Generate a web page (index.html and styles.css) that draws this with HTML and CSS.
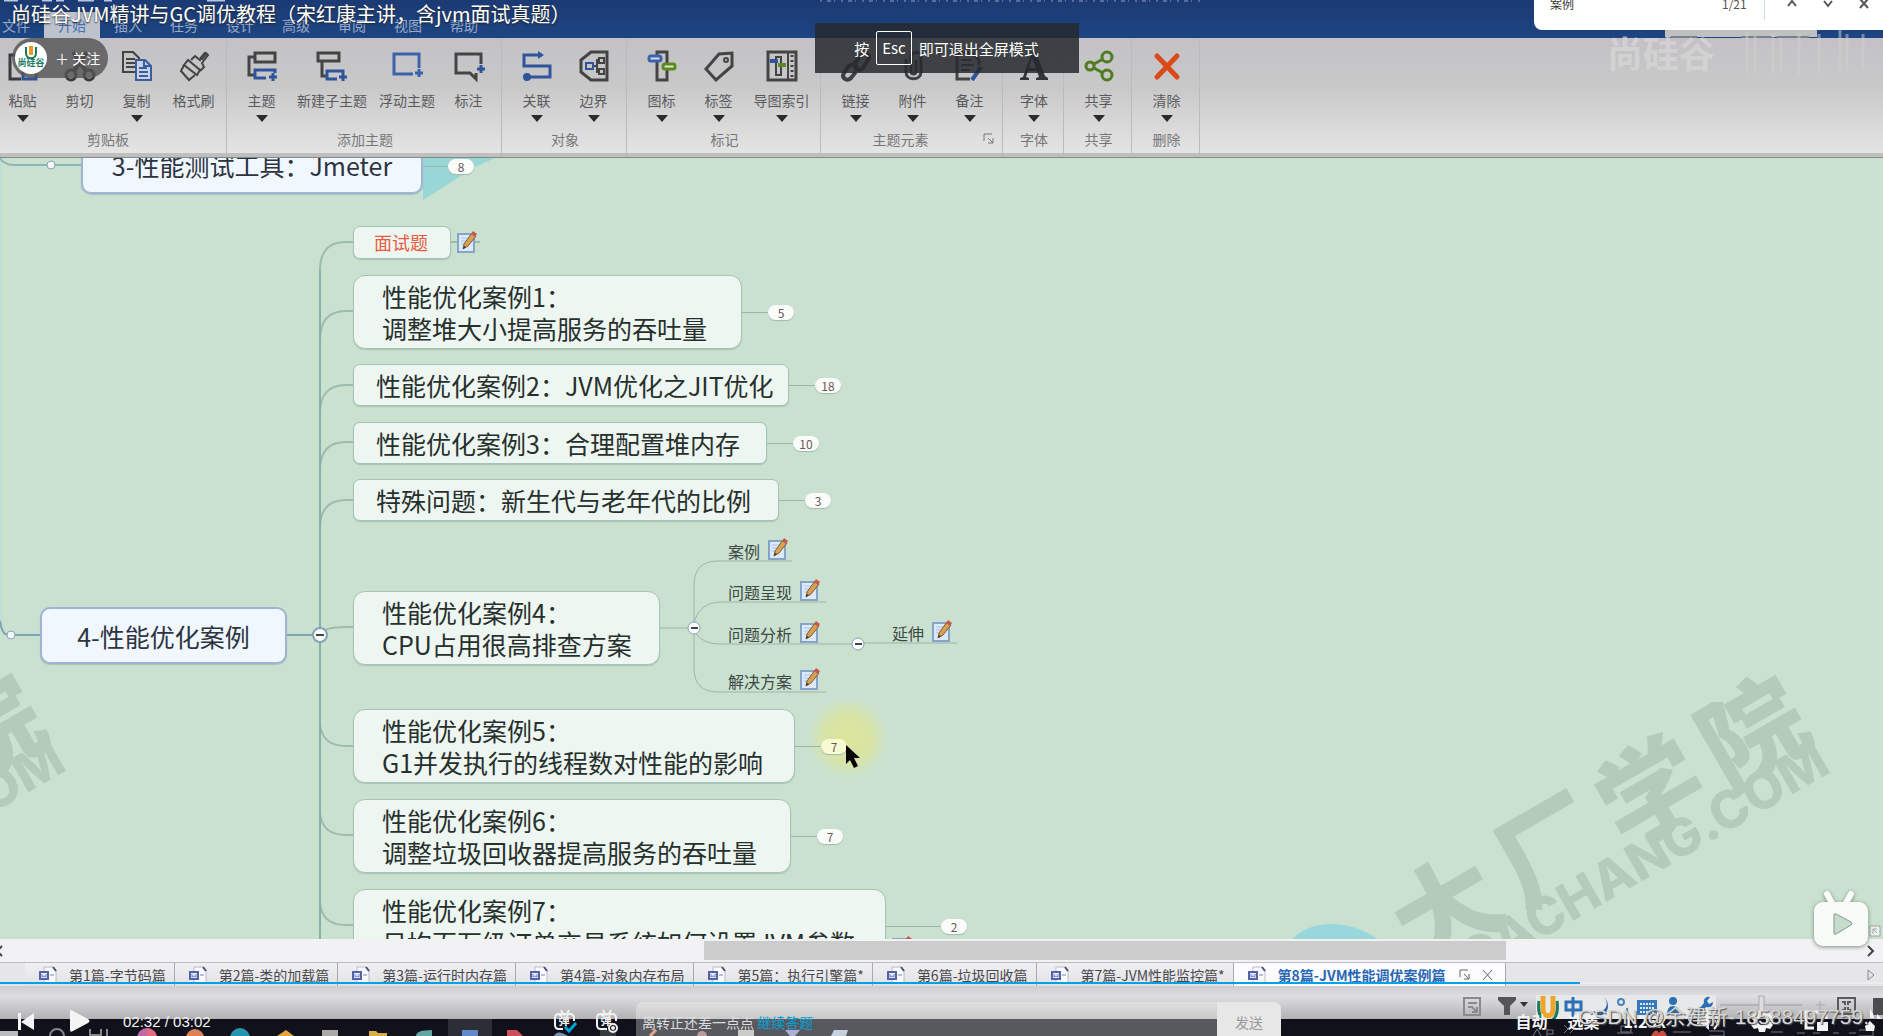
FILE: index.html
```html
<!DOCTYPE html>
<html lang="zh-CN">
<head>
<meta charset="utf-8">
<meta name="viewport" content="width=device-width, initial-scale=1">
<title>尚硅谷JVM精讲与GC调优教程</title>
<link rel="stylesheet" href="styles.css">
</head>
<body>
<svg class="defs" aria-hidden="true">
  <symbol id="note" viewBox="0 0 20 22">
    <path d="M1 3h16v18H1z" fill="#dbe9f8" stroke="#86a3c9" stroke-width="2"/>
    <path d="M4 7h8M4 10h6M4 13h4" stroke="#aac6e6"/>
    <path d="M6 18l1-5L15 2l4 3-8 10z" fill="#d9a252" stroke="#7a5a35"/>
    <path d="M14 3l2-3 4 3-2 3z" fill="#c4594c"/>
    <path d="M6 18l1-3 2 1z" fill="#333"/>
  </symbol>
  <symbol id="doc" viewBox="0 0 18 18">
    <path d="M5 1h9l3 3v13H5z" fill="#fbfbfd" stroke="#b9bac6"/>
    <path d="M14 1l3 4" stroke="#4a5078" stroke-width="2"/>
    <rect x="1" y="6" width="8" height="7" fill="#e8ebf8" stroke="#5263ab" stroke-width="2"/>
    <path d="M3 8v3l2-1 2 1V8M11 9h4" stroke="#7581bb" fill="none"/>
  </symbol>
  <symbol id="arrow" viewBox="0 0 12 7"><path d="M0 0h12L6 7z" fill="#2b2b2d"/></symbol>
</svg>

<main class="screen">
  <header class="titlebar">
    <svg class="quick" viewBox="0 0 240 4" aria-hidden="true"><path d="M4 0h14M42 0h10M56 0h8M78 0h16M104 0h8M207 0h18" stroke="#b8c6de" stroke-width="3"/></svg>
    <svg class="docname" viewBox="0 0 390 4" aria-hidden="true"><path d="M0 1h385" stroke="#8ea3c6" stroke-width="2" stroke-dasharray="2 5 4 3 1 6"/></svg>
    <nav class="menu">
      <button>文件</button><button class="current">开始</button><button>插入</button><button>任务</button><button>设计</button><button>高级</button><button>审阅</button><button>视图</button><button>帮助</button>
    </nav>
  </header>

  <section class="ribbon">
    <div class="group">
      <div class="tools">
        <button class="tool"><svg class="icon" viewBox="0 0 30 30" fill="none" stroke="#3a3a3c" stroke-width="3"><path d="M13 28H2V4h24v6"/><path d="M15 12h13v16H15z" stroke="#2f549b"/></svg><span>粘贴</span><svg class="arrow"><use href="#arrow"/></svg></button>
        <button class="tool"><svg class="icon" viewBox="0 0 30 30" fill="none" stroke="#3a3a3c" stroke-width="3"><circle cx="6" cy="24" r="5"/><circle cx="24" cy="24" r="5"/><path d="M9 20L22 1M21 20L8 1" stroke-width="4"/></svg><span>剪切</span></button>
        <button class="tool"><svg class="icon" viewBox="0 0 30 30" fill="none" stroke="#444" stroke-width="2"><path d="M1 1h10l6 6v14H1z"/><path d="M4 8h9M4 12h9M4 16h9"/><path d="M14 9h9l6 6v14H14z" fill="#c9d2e4" stroke="#3b5da0"/><path d="M17 17h8M17 21h9M17 25h9M22 9v6h7" stroke="#3b5da0"/></svg><span>复制</span><svg class="arrow"><use href="#arrow"/></svg></button>
        <button class="tool"><svg class="icon" viewBox="0 0 30 30" fill="none" stroke="#444" stroke-width="2"><path d="M9 9l12 10-3 5-13-10z"/><path d="M5 14l-3 6 8 9 6-5M12 9l4-4 5 4 6-7 2 2-6 8 2 4-4 4"/><path d="M22 8l5-6" stroke-width="4"/></svg><span>格式刷</span></button>
      </div>
      <div class="caption">剪贴板</div>
    </div>
    <div class="group">
      <div class="tools">
        <button class="tool"><svg class="icon" viewBox="0 0 30 30" fill="none" stroke="#444" stroke-width="3"><path d="M8 2h20v9H8zM8 6H2v18h5"/><path d="M19 27H8v-8h20v3M26 22v8M22 26h8" stroke="#2f549b"/></svg><span>主题</span><svg class="arrow"><use href="#arrow"/></svg></button>
        <button class="tool wide"><svg class="icon" viewBox="0 0 30 30" fill="none" stroke="#444" stroke-width="3"><path d="M1 2h21v8H1zM5 10v15h4"/><path d="M20 28H10v-8h16v3M26 22v8M22 26h8" stroke="#2f549b"/></svg><span>新建子主题</span></button>
        <button class="tool mid"><svg class="icon" viewBox="0 0 30 30" fill="none" stroke="#3c62aa" stroke-width="3"><path d="M21 23H2V3h25v14M27 18v8M23 22h8"/></svg><span>浮动主题</span></button>
        <button class="tool"><svg class="icon" viewBox="0 0 30 30" fill="none" stroke="#444" stroke-width="3"><path d="M27 13V3H2v19h14l6 6v-6"/><path d="M27 14v8M23 18h8" stroke="#2f549b"/></svg><span>标注</span></button>
      </div>
      <div class="caption">添加主题</div>
    </div>
    <div class="group">
      <div class="tools">
        <button class="tool"><svg class="icon" viewBox="0 0 30 30" fill="none" stroke="#2f549b" stroke-width="3"><path d="M18 4H2v11h26v11H6"/><path d="M16 0v8l6-4z" fill="#2f549b" stroke="none"/><circle cx="5" cy="26" r="4" fill="#2f549b" stroke="none"/></svg><span>关联</span><svg class="arrow"><use href="#arrow"/></svg></button>
        <button class="tool"><svg class="icon" viewBox="0 0 30 30" fill="none" stroke="#444" stroke-width="3"><path d="M12 1h16v28H12L2 21V9z"/><path d="M15 15h3M21 9h-3v12h3" stroke-width="2"/><rect x="7" y="12" width="7" height="6" stroke="#2f549b" stroke-width="2"/><rect x="20" y="7" width="5" height="5" stroke-width="2"/><rect x="20" y="18" width="5" height="5" stroke-width="2"/></svg><span>边界</span><svg class="arrow"><use href="#arrow"/></svg></button>
      </div>
      <div class="caption">对象</div>
    </div>
    <div class="group">
      <div class="tools">
        <button class="tool"><svg class="icon" viewBox="0 0 30 30" fill="none" stroke="#444" stroke-width="2"><path d="M10 1h10v28H10z" stroke-width="3"/><rect x="2" y="5" width="12" height="5" rx="2" fill="#d4daea" stroke="#3c62aa" stroke-width="3"/><rect x="16" y="13" width="12" height="5" rx="2" fill="#dbe6c4" stroke="#5b8a1f" stroke-width="3"/></svg><span>图标</span><svg class="arrow"><use href="#arrow"/></svg></button>
        <button class="tool"><svg class="icon" viewBox="0 0 30 30" fill="none" stroke="#444" stroke-width="3"><path d="M2 18L15 3l13-1v13L12 29z"/><circle cx="22" cy="9" r="2" stroke-width="2"/></svg><span>标签</span><svg class="arrow"><use href="#arrow"/></svg></button>
        <button class="tool index"><svg class="icon" viewBox="0 0 30 30" fill="none" stroke="#444" stroke-width="3"><path d="M1 1h28v28H1z"/><path d="M21 2v26M9 6h5v18H9z" stroke-width="2"/><path d="M25 4v23" stroke-dasharray="2 3"/><path d="M3 10h8" stroke="#2f549b" stroke-width="4"/><path d="M11 14h8" stroke="#5b8a1f" stroke-width="4"/></svg><span>导图索引</span><svg class="arrow"><use href="#arrow"/></svg></button>
      </div>
      <div class="caption">标记</div>
    </div>
    <div class="group">
      <div class="tools">
        <button class="tool"><svg class="icon" viewBox="0 0 30 30" fill="none" stroke="#3f4043" stroke-width="4" stroke-linecap="round"><path d="M14 12l6-8c4-4 10 0 7 5l-5 8c-3 3-7 2-8-1M16 17c-1-4-6-5-9-1l-4 6c-3 5 3 9 7 5l4-5"/></svg><span>链接</span><svg class="arrow"><use href="#arrow"/></svg></button>
        <button class="tool"><svg class="icon" viewBox="0 0 30 30" fill="none" stroke="#3f4043" stroke-width="3"><path d="M8 8v13c0 9 15 9 15 0V6c0-6-10-6-10 0v14c0 4 5 4 5 0V9"/></svg><span>附件</span><svg class="arrow"><use href="#arrow"/></svg></button>
        <button class="tool"><svg class="icon" viewBox="0 0 30 30" fill="none" stroke="#444" stroke-width="3"><path d="M15 28H2V2h15l7 7v5"/><path d="M6 9h11M6 14h13M6 19h9" stroke-width="2"/><path d="M17 29l9-13" stroke="#2f549b" stroke-width="4"/></svg><span>备注</span><svg class="arrow"><use href="#arrow"/></svg></button>
      </div>
      <div class="caption shifted">主题元素</div>
      <svg class="launcher" viewBox="0 0 12 12" fill="none" stroke="#777"><path d="M1 8V1h8M5 5l5 5M10 5v5H5"/></svg>
    </div>
    <div class="group">
      <div class="tools">
        <button class="tool narrow"><svg class="icon" viewBox="0 0 30 30"><path d="M1 29v-2l3-1L13 1h4l9 24 3 2v2H17v-2l3-1-2-6h-9l-2 6 3 1v2zM10 17h7l-4-10z" fill="#333335"/></svg><span>字体</span><svg class="arrow"><use href="#arrow"/></svg></button>
      </div>
      <div class="caption">字体</div>
    </div>
    <div class="group">
      <div class="tools">
        <button class="tool"><svg class="icon" viewBox="0 0 30 30" fill="none" stroke="#4f7c22" stroke-width="3"><circle cx="6" cy="15" r="4"/><circle cx="23" cy="6" r="5"/><circle cx="23" cy="24" r="5"/><path d="M10 13l9-5M10 17l9 5"/></svg><span>共享</span><svg class="arrow"><use href="#arrow"/></svg></button>
      </div>
      <div class="caption">共享</div>
    </div>
    <div class="group">
      <div class="tools">
        <button class="tool"><svg class="icon" viewBox="0 0 30 30" fill="none" stroke="#da4a18" stroke-width="5" stroke-linecap="round"><path d="M5 5l20 21M25 5L5 26"/></svg><span>清除</span><svg class="arrow"><use href="#arrow"/></svg></button>
      </div>
      <div class="caption">删除</div>
    </div>
  </section>

  <section class="canvas">
    <div class="watermark"><div class="wm-cn"><span>大</span><span>厂</span><span>学</span><span>院</span></div><div class="wm-en">DACHANG.COM</div></div>
    <div class="watermark previous"><div class="wm-cn"><span>大</span><span>厂</span><span>学</span><span>院</span></div><div class="wm-en">DACHANG.COM</div></div>
    <div class="halo"></div>

    <svg class="links" viewBox="0 158 1400 781" fill="none" aria-hidden="true">
      <path d="M423 158h72l-20 9-52 33z" fill="#98d6d8"/>
      <path d="M1292 939c20-20 56-20 86 0z" fill="#98d8dc"/>
      <path d="M1 158v463" stroke="#b4dad6"/>
      <path d="M0 621q2 14 8 14M15 635h25M287 635h32" stroke="#7aa5b5" stroke-width="2"/>
      <path d="M0 158q4 7 14 7h34M54 165h28" stroke="#8fb4b8" stroke-width="2"/>
      <g stroke="#9dbcae" stroke-width="2">
        <path d="M320 939V270q0-28 26-28h8" />
        <path d="M320 340q0-29 26-29h8M320 413q0-28 26-28h8M320 470q0-28 26-28h8M320 528q0-28 26-28h8M320 634q4-7 26-7h8M320 724q2 22 26 22h8M320 813q2 22 26 22h8M320 903q2 22 26 22h8"/>
        <path d="M451 242h29"/>
      </g>
      <path d="M320 270V939" stroke="#85b0a6" stroke-width="2"/>
      <g stroke="#9db5a8">
        <path d="M660 628h28M694 622V585q0-24 24-24h74M694 622q6-20 26-20h106M696 634q8 10 24 10h132M694 634v34q0 24 24 24h108M864 643h93"/>
      </g>
      <g fill="#fbfdfc" stroke="#86a3b5"><circle cx="51" cy="165" r="4"/><circle cx="11" cy="635" r="4"/><circle cx="320" cy="635" r="7" stroke-width="2"/><circle cx="694" cy="628" r="6"/><circle cx="858" cy="644" r="6"/></g>
      <path d="M316 635h8M691 628h7M855 644h7" stroke="#444" stroke-width="2"/>
    </svg>

    <div class="node branch jmeter">3-性能测试工具：Jmeter<span class="count">8</span></div>
    <div class="node branch cases">4-性能优化案例</div>
    <div class="node small interview">面试题</div>
    <div class="node double case1">性能优化案例1：<br>调整堆大小提高服务的吞吐量<span class="count">5</span></div>
    <div class="node case2">性能优化案例2：JVM优化之JIT优化<span class="count">18</span></div>
    <div class="node case3">性能优化案例3：合理配置堆内存<span class="count">10</span></div>
    <div class="node special">特殊问题：新生代与老年代的比例<span class="count">3</span></div>
    <div class="node double case4">性能优化案例4：<br>CPU占用很高排查方案</div>
    <div class="node double case5">性能优化案例5：<br>G1并发执行的线程数对性能的影响<span class="count hot">7</span></div>
    <div class="node double case6">性能优化案例6：<br>调整垃圾回收器提高服务的吞吐量<span class="count">7</span></div>
    <div class="node double case7">性能优化案例7：<br>日均百万级订单交易系统如何设置JVM参数<span class="count far">2</span></div>

    <svg class="note note-interview"><use href="#note"/></svg>
    <svg class="note note-case7"><use href="#note"/></svg>
    <div class="leaf leaf-case">案例<svg class="mark"><use href="#note"/></svg></div>
    <div class="leaf leaf-show">问题呈现<svg class="mark"><use href="#note"/></svg></div>
    <div class="leaf leaf-analyse">问题分析<svg class="mark"><use href="#note"/></svg></div>
    <div class="leaf leaf-solve">解决方案<svg class="mark"><use href="#note"/></svg></div>
    <div class="leaf leaf-extend">延伸<svg class="mark"><use href="#note"/></svg></div>
    <svg class="cursor" viewBox="0 0 14 24"><path d="M0 0v19l4-4 4 8 4-2-4-8h6z" fill="#050505"/></svg>
    <svg class="corner" viewBox="0 0 12 12" fill="#eef2ef" stroke="#9aa79f"><path d="M1 1h10v10H1zM4 9V4h4M4 4l4 4"/></svg>
  </section>

  <div class="scrollbar">
    <svg class="chev" viewBox="0 0 8 12"><path d="M6 1L1 6l5 5" fill="none" stroke="#444" stroke-width="2"/></svg>
    <div class="track"><div class="thumb"></div></div>
    <svg class="chev" viewBox="0 0 8 12"><path d="M1 1l5 5-5 5" fill="none" stroke="#444" stroke-width="2"/></svg>
  </div>

  <nav class="tabs">
    <button class="tab"><svg class="doc"><use href="#doc"/></svg>第1篇-字节码篇</button>
    <button class="tab"><svg class="doc"><use href="#doc"/></svg>第2篇-类的加载篇</button>
    <button class="tab"><svg class="doc"><use href="#doc"/></svg>第3篇-运行时内存篇</button>
    <button class="tab"><svg class="doc"><use href="#doc"/></svg>第4篇-对象内存布局</button>
    <button class="tab"><svg class="doc"><use href="#doc"/></svg>第5篇：执行引擎篇*</button>
    <button class="tab"><svg class="doc"><use href="#doc"/></svg>第6篇-垃圾回收篇</button>
    <button class="tab"><svg class="doc"><use href="#doc"/></svg>第7篇-JVM性能监控篇*</button>
    <button class="tab active"><svg class="doc"><use href="#doc"/></svg>第8篇-JVM性能调优案例篇<svg class="tabicons" viewBox="0 0 36 12" fill="none" stroke="#666"><path d="M1 8V1h8M5 5l5 5M10 5v5H5M24 1l9 10M33 1l-9 10"/></svg></button>
    <svg class="next" viewBox="0 0 8 12"><path d="M1 1l6 5-6 5z" fill="none" stroke="#888"/></svg>
  </nav>

  <footer class="status">
    <svg class="statusicons" viewBox="0 0 424 30" fill="none" aria-hidden="true">
      <rect x="5" y="5" width="16" height="17" stroke="#8a8a8c" stroke-width="2"/><path d="M9 10h9M9 14h5M13 14l5 5M18 14v5h-5" stroke="#8a8a8c" stroke-width="2"/>
      <path d="M39 4h18v3l-6 6v9h-6v-9l-6-6z" fill="#555558"/><path d="M61 9h8l-4 5z" fill="#333"/>
      <rect x="77" y="2" width="180" height="26" fill="#e6e8ea"/>
      <path d="M80 8c-2 16 4 20 9 20s11-4 9-20" stroke="#157a62" stroke-width="3"/><path d="M84 3v13c0 9 10 9 10 0V3" stroke="#eda52a" stroke-width="5"/>
      <path d="M107 9h15v8h-15zM114 4v20" stroke="#2c6fb4" stroke-width="3"/>
      <path d="M145 4c8 10-3 18-11 14 5 8 15 4 15-5 0-4-2-7-4-9z" fill="#2665ad"/>
      <circle cx="162" cy="9" r="3" stroke="#4b83bb" stroke-width="2"/><path d="M168 15q1 4-3 6" stroke="#4b83bb" stroke-width="2"/>
      <rect x="178" y="7" width="20" height="15" fill="#3678ba"/><path d="M181 11h14M181 15h14M181 19h14" stroke="#dce9f5" stroke-width="2" stroke-dasharray="2 1"/>
      <circle cx="214" cy="8" r="4" fill="#2c6fb4"/><path d="M208 22q0-9 6-9t6 9z" fill="#2c6fb4"/>
      <path d="M235 22l10-12c-1-5 3-7 6-6l-3 4 2 3 4-2c0 5-4 6-7 5l-8 10z" fill="#2c6fb4"/>
      <path d="M261 12h82" stroke="#9a9a9c"/><rect x="300" y="3" width="5" height="20" fill="#dedee0" stroke="#aaa"/><path d="M357 12h9M361 8v9" stroke="#aaa"/>
      <rect x="379" y="5" width="17" height="16" stroke="#5b5b5d" stroke-width="2"/><path d="M383 9h3v3M392 9h-3v3M383 17h3v-3M392 17h-3v-3" stroke="#5b5b5d" stroke-width="2"/>
      <rect x="414" y="5" width="10" height="17" fill="#4c4c50"/>
    </svg>
  </footer>

  <footer class="taskbar">
    <svg class="apps" viewBox="0 0 830 17" fill="none" aria-hidden="true">
      <path d="M448 0h44v17h-44z" fill="#2c2d36"/>
      <path d="M0 12h18v5H0z" fill="#b9babd"/><circle cx="57" cy="17" r="7" stroke="#85868a" stroke-width="2"/><path d="M90 10v7M101 10v7M107 10v7M90 16h11" stroke="#888" stroke-width="2"/>
      <circle cx="147" cy="19" r="10" fill="#c269a9"/><path d="M147 9q9 2 10 8h-10z" fill="#e46c7e"/>
      <circle cx="195" cy="19" r="9" fill="#dd8258"/><circle cx="240" cy="19" r="10" fill="#2595ad"/>
      <path d="M277 17l9-6 8 6z" fill="#e6a441"/><path d="M322 11h16v6h-16z" fill="#aaa9a6"/><path d="M369 12h7l2 2h9v3h-18z" fill="#d8ad44"/>
      <path d="M416 17q0-6 16-6v6z" fill="#60a5a3"/><path d="M462 11h16v6h-16z" fill="#6288c8"/><path d="M507 11h10l6 6h-16z" fill="#ce4e5b"/><path d="M554 17q3-7 14 0z" fill="#7193ae"/><path d="M600 11h16v6h-16z" fill="#363b40"/>
      <path d="M650 17l6-6" stroke="#db8055" stroke-width="3"/><circle cx="702" cy="17" r="5" fill="#a66d70"/><path d="M738 11h16v6h-16z" fill="#b5b5b0"/><path d="M785 11h15l-5 6h-5z" fill="#8a8fc2"/><path d="M834 11h14l-2 6h-15z" fill="#adbcca"/>
    </svg>
    <svg class="tray" viewBox="0 0 350 17" fill="none" stroke="#77787d" aria-hidden="true"><path d="M0 17l4-7 4 7M14 10v7M14 11h6v4h-6M31 6l4 4-4 4M37 6l4 4-4 4M88 7h10v6h-10zM84 14h16M140 13h18M176 12h15v5h-15M238 13h12M264 14h8M280 14h7M300 14h6M316 14h7M326 11h14v6h-14"/><path d="M118 17q5-9 8-3 4-6 8 3z" fill="#c94d3c" stroke="none"/></svg>
  </footer>
</main>

<div class="studio" aria-hidden="true"><b>尚硅谷</b><svg viewBox="0 0 202 48" fill="none"><path d="M0 0h152v7H0z" fill="#bfc0bf"/><path d="M6 7h26M76 7h30M112 7h32" stroke="#78808d" stroke-width="2"/><path d="M82 2v44M90 6v38M108 4v40M116 8v32M134 3v42M154 4v40M175 0v44M182 4v36M198 4v36" stroke="#d2cfd0" stroke-opacity=".5" stroke-width="3"/></svg></div>
<h1 class="videotitle">尚硅谷JVM精讲与GC调优教程（宋红康主讲，含jvm面试真题）</h1>
<button class="follow"><svg viewBox="0 0 32 32"><circle cx="16" cy="16" r="16" fill="#fff"/><path d="M11 5v6c0 7 10 7 10 0V5" fill="none" stroke="#157a62" stroke-width="2"/><path d="M16 4v9" stroke="#f09b20" stroke-width="4"/><text x="16" y="24" text-anchor="middle">尚硅谷</text></svg><span>＋ 关注</span></button>
<div class="escape">按<kbd>Esc</kbd>即可退出全屏模式</div>
<div class="find">
  <input type="text" value="案例" aria-label="在网页中查找"><span class="hits">1/21</span>
  <div class="findbuttons">
    <button aria-label="上一个"><svg viewBox="0 0 12 12"><path d="M2 8l4-5 4 5"/></svg></button>
    <button aria-label="下一个"><svg viewBox="0 0 12 12"><path d="M2 3l4 5 4-5"/></svg></button>
    <button aria-label="关闭"><svg viewBox="0 0 12 12"><path d="M2 1l8 9M10 1L2 10"/></svg></button>
  </div>
</div>
<svg class="bigplay" viewBox="0 0 60 60"><path d="M16 4l5 9M40 4l-5 9" stroke="#fbfdfb" stroke-width="6" stroke-linecap="round"/><rect x="3" y="12" width="54" height="44" rx="9" fill="#f7faf7"/><path d="M23 25v18q0 2 2 1l15-9q2-1 0-3l-15-8q-2-1-2 1z" fill="#c6dccc" stroke="#849a8a"/></svg>

<div class="progress"><div class="played"></div></div>
<section class="player">
  <div class="left">
    <button aria-label="上一集"><svg class="prev" viewBox="0 0 17 17" fill="#f4f4f5"><path d="M0 0h3v17H0zM16 0v17L3 9z"/></svg></button>
    <button aria-label="播放"><svg class="play" viewBox="0 0 20 22" fill="#f4f4f5"><path d="M0 1q0-2 3 0l15 8q3 2 0 4L3 21q-3 2-3-1z"/></svg></button>
    <time>02:32 / 03:02</time>
  </div>
  <div class="danmaku">
    <button aria-label="弹幕开关"><svg viewBox="0 0 24 24" fill="none" stroke="#f2f2f2" stroke-width="2"><path d="M8 1l2 4M16 1l-2 4M21 12V9q0-4-4-4H6Q2 5 2 9v7q0 4 4 4h4"/><text x="11" y="16" text-anchor="middle">弹</text><path d="M12 18l4 4 7-8" stroke="#00a1d6" stroke-width="3"/></svg></button>
    <button aria-label="弹幕设置"><svg viewBox="0 0 24 24" fill="none" stroke="#f2f2f2" stroke-width="2"><path d="M8 1l2 4M16 1l-2 4M21 12V9q0-4-4-4H6Q2 5 2 9v7q0 4 4 4h6"/><text x="11" y="16" text-anchor="middle">弹</text><circle cx="18" cy="19" r="4"/><circle cx="18" cy="19" r="1"/></svg></button>
  </div>
  <div class="sender"><p>离转正还差一点点 <a href="#quiz">继续答题</a></p><button>发送</button></div>
  <div class="right">
    <button>自动</button><button>选集</button><button class="rate">1.25x</button>
    <button aria-label="音量"><svg viewBox="0 0 24 24"><path d="M1 9h5l7-6v18l-7-6H1z" fill="#f4f4f4"/><path d="M16 8q4 4 0 8M18 4q8 8 0 16" fill="none" stroke="#f4f4f4" stroke-width="2"/></svg></button>
    <button aria-label="设置"><svg viewBox="0 0 24 24"><path fill-rule="evenodd" d="M9 1h6l1 4 4-1 3 5-3 3 3 4-3 4-4-1-1 4H9l-1-4-4 1-3-4 3-4-3-3 3-5 4 1zM12 8a4 4 0 100 8 4 4 0 000-8z" fill="#f4f4f4"/></svg></button>
    <button aria-label="画中画"><svg viewBox="0 0 24 24"><path d="M10 19H2V3h20v7" fill="none" stroke="#f4f4f4" stroke-width="3"/><rect x="13" y="13" width="11" height="9" fill="#f4f4f4"/></svg></button>
    <button aria-label="退出全屏"><svg viewBox="0 0 24 24" fill="#f4f4f4"><path d="M12 0q4 5 4 9h-4zM12 12l5 5-1 5h-8l-1-5zM0 10l5-6v6zM19 5l5 5h-5z"/></svg></button>
  </div>
</section>
<div class="credit">CSDN @余建新-18588497759.</div>
</body>
</html>
```
FILE: styles.css
```css
* { box-sizing: border-box; }
body {
  margin: 0;
  position: relative;
  height: 100vh;
  overflow: hidden;
  font-family: "Noto Sans CJK SC", "Noto Sans", sans-serif;
  color: #222;
}
button { border: 0; padding: 0; margin: 0; background: none; font: inherit; color: inherit; }
svg { display: block; flex: none; overflow: visible; }
.defs { position: absolute; width: 0; height: 0; overflow: hidden; }
.screen { display: flex; flex-direction: column; height: 100%; background: #cae1d0; }

/* title bar and menu */
.titlebar { position: relative; flex: none; height: 38px; overflow: hidden; background: linear-gradient(#1c3a73, #1c4583); display: flex; align-items: flex-end; }
.quick { position: absolute; left: 0; top: 0; width: 240px; height: 4px; }
.docname { position: absolute; left: 820px; top: 0; width: 390px; height: 4px; opacity: .5; }
.menu { display: flex; margin-left: -12px; font-size: 14px; color: #98aaca; }
.menu button { width: 56px; height: 26px; line-height: 26px; }
.menu .current { background: #bdc2cc; color: #456fae; }

/* ribbon */
.ribbon { flex: none; display: flex; height: 120px; overflow: hidden; background: linear-gradient(#c3c1c4, #c8c8c9 40%, #e6e6e6); border-bottom: 1px solid #7f8f86; box-shadow: inset 0 -4px #bfbfc0; }
.group { position: relative; display: flex; flex-direction: column; padding: 13px 4px 0 6px; border-right: 1px solid #bbbbbf; }
.group:first-child { margin-left: -12px; }
.tools { display: flex; height: 78px; }
.tool { display: flex; flex-direction: column; align-items: center; justify-content: flex-start; width: 57px; font-size: 14px; line-height: 20px; color: #5a5a5d; white-space: nowrap; }
.tool.wide { width: 84px; }
.tool.mid { width: 66px; }
.tool.index { width: 69px; }
.tool.narrow { width: 50px; }
.icon { width: 30px; height: 30px; margin-bottom: 9px; }
.arrow { width: 12px; height: 7px; margin-top: 5px; }
.caption { text-align: center; font-size: 14px; line-height: 20px; color: #77777a; }
.caption.shifted { padding-right: 24px; }
.launcher { position: absolute; right: 7px; bottom: 12px; width: 12px; height: 12px; }

/* mind-map canvas */
.canvas { position: relative; flex: 1; min-height: 0; overflow: hidden; background: #cae1d0; }
.links { position: absolute; left: 0; top: 0; width: 1400px; height: 781px; }
.watermark { position: absolute; left: 1380px; top: 596px; width: 480px; height: 160px; color: #b4cbbb; transform: rotate(-30deg); }
.watermark.previous { left: -384px; top: 594px; }
.wm-cn { display: flex; gap: 14px; font-weight: 900; font-size: 104px; line-height: 104px; }
.wm-en { margin-top: -16px; padding-left: 42px; font-family: Inter, sans-serif; font-weight: 800; font-size: 52px; line-height: 52px; }
.halo { position: absolute; left: 808px; top: 540px; width: 80px; height: 80px; border-radius: 50%; background: radial-gradient(#dde59a, #d8e4a5 40%, rgba(208, 227, 190, 0) 72%); }
.node { position: absolute; left: 353px; height: 42px; padding: 4px 22px; border: 1px solid #a5c4b5; border-radius: 7px; background: #eef6f1; color: #27302d; font-size: 25px; line-height: 32px; white-space: nowrap; box-shadow: 0 1px 1px #a9c3b5; }
.double { height: 74px; padding: 4px 28px; border-radius: 12px; }
.branch { background: #f1f7ff; border: 2px solid #9db5d2; border-radius: 10px; text-align: center; color: #2d3440; }
.small { height: 33px; font-size: 18px; line-height: 24px; color: #e95b43; }
.jmeter { left: 81px; top: -21px; width: 342px; height: 57px; padding: 10px 0; }
.cases { left: 40px; top: 449px; width: 247px; height: 57px; padding: 11px 0; }
.interview { top: 68px; width: 98px; padding: 3px 20px; }
.case1 { top: 117px; width: 389px; }
.case2 { top: 206px; width: 436px; }
.case3 { top: 264px; width: 414px; }
.special { top: 321px; width: 426px; }
.case4 { top: 433px; width: 307px; }
.case5 { top: 551px; width: 442px; }
.case6 { top: 641px; width: 438px; }
.case7 { top: 731px; width: 533px; }
.count { position: absolute; left: calc(100% + 27px); top: calc(50% - 7px); width: 26px; height: 15px; border-radius: 8px; background: #fafcfa; box-shadow: 0 1px 1px #a3b8ab; font-size: 12px; line-height: 15px; text-align: center; color: #6b5757; }
.count::before { content: ""; position: absolute; right: 100%; top: 7px; width: 26px; height: 1px; background: #9cb6a8; }
.count.hot { background: #f8fad2; }
.count.far { left: calc(100% + 56px); }
.count.far::before { width: 55px; }
.note { position: absolute; width: 20px; height: 22px; }
.note-interview { left: 457px; top: 73px; }
.note-case7 { left: 892px; top: 778px; }
.leaf { position: absolute; left: 728px; display: flex; align-items: center; gap: 8px; font-size: 16px; line-height: 24px; color: #3d4944; }
.mark { width: 20px; height: 22px; margin-bottom: 4px; }
.leaf-case { top: 380px; }
.leaf-show { top: 421px; }
.leaf-analyse { top: 463px; }
.leaf-solve { top: 510px; }
.leaf-extend { left: 892px; top: 462px; }
.cursor { position: absolute; left: 846px; top: 587px; width: 14px; height: 24px; }
.corner { position: absolute; right: 2px; bottom: 2px; width: 12px; height: 12px; }

/* scroll bar and sheet tabs */
.scrollbar { flex: none; display: flex; align-items: center; height: 23px; padding: 0 8px 0 0; background: #f2f1f3; }
.chev { width: 8px; height: 12px; }
.scrollbar .chev:first-child { margin-left: -4px; }
.track { flex: 1; height: 19px; }
.thumb { width: 43%; height: 100%; margin-left: 37.6%; background: #cdcccd; }
.tabs { flex: none; display: flex; align-items: center; height: 24px; padding: 0 8px 0 25px; border-top: 1px solid #bdbdc0; background: #e6e6e9; }
.tab { display: flex; align-items: center; height: 23px; padding: 0 8px 0 14px; border-right: 1px solid #a9a9af; background: linear-gradient(#f0f0f3, #e2e2e5); font-size: 14px; color: #48484c; white-space: nowrap; }
.tab.active { background: #fcfcfe; color: #2867b4; font-weight: 700; padding-right: 10px; }
.doc { width: 18px; height: 18px; margin-right: 12px; }
.tabicons { width: 36px; height: 12px; margin-left: 13px; }
.next { width: 8px; height: 12px; margin-left: auto; }

/* status bar and taskbar */
.status { flex: none; display: flex; justify-content: flex-end; height: 33px; padding-top: 4px; background: linear-gradient(#cdcdd0, #dedee0 30%, #b2b2b4); }
.statusicons { width: 424px; height: 30px; margin-top: 3px; }
.taskbar { flex: none; display: flex; justify-content: space-between; height: 17px; overflow: hidden; background: #10111a; }
.apps { width: 830px; height: 17px; }
.tray { width: 350px; height: 17px; }

/* overlays of the video player */
.videotitle { position: absolute; left: 11px; top: 0; margin: 0; font-size: 20px; line-height: 28px; font-weight: 400; color: #fff; white-space: nowrap; text-shadow: 0 1px 2px #222; }
.follow { position: absolute; left: 12px; top: 38px; display: flex; align-items: center; gap: 8px; width: 96px; height: 40px; padding-left: 3px; border-radius: 20px; background: rgba(82, 82, 84, .8); color: #fff; font-size: 14px; white-space: nowrap; }
.follow svg { width: 32px; height: 32px; }
.follow text { font-size: 9px; font-weight: 700; fill: #157a62; }
.escape { position: absolute; left: 50%; top: 23px; margin-left: -127px; display: flex; align-items: center; justify-content: center; gap: 7px; width: 264px; height: 50px; background: rgba(38, 41, 46, .85); color: #fff; font-size: 15px; white-space: nowrap; }
.escape kbd { padding: 0 5px; border: 1px solid #fff; border-radius: 2px; font: inherit; line-height: 32px; }
.find { position: absolute; right: 0; top: 0; display: flex; align-items: flex-start; width: 349px; height: 30px; padding-left: 16px; border-radius: 0 0 0 8px; background: #fff; font-size: 12px; }
.find input { flex: 1; min-width: 0; height: 18px; margin-top: -5px; padding: 0; border: 0; font: inherit; line-height: 18px; color: #333; background: none; }
.hits { width: 42px; margin-top: -5px; line-height: 18px; color: #555; }
.findbuttons { display: flex; gap: 22px; height: 20px; padding: 0 12px 0 20px; border-left: 1px solid #c9dcf3; }
.find button { height: 12px; margin-top: -2px; }
.find svg { width: 14px; height: 12px; fill: none; stroke: #555; stroke-width: 2; }
.studio { position: absolute; right: 16px; top: 30px; display: flex; height: 48px; }
.studio b { margin-right: -50px; font-size: 36px; line-height: 44px; color: #d9d7d8; z-index: 1; opacity: .7; }
.studio svg { width: 202px; height: 48px; }
.bigplay { position: absolute; right: 12px; bottom: 86px; width: 60px; height: 60px; filter: drop-shadow(0 1px 2px #788a7e); }
.progress { position: absolute; left: 0; right: 0; bottom: 52px; height: 2px; background: #ededee; }
.played { width: 83.9%; height: 100%; background: #00a1e6; }
.player { position: absolute; left: 0; right: 0; bottom: 0; display: grid; grid-template-columns: 553px 83px minmax(0, 645px) 1fr; height: 34px; color: #f4f4f4; }
.left, .danmaku, .right { display: flex; align-items: center; padding-top: 4px; }
.left { padding-left: 18px; gap: 35px; }
.prev { width: 17px; height: 17px; }
.play { width: 20px; height: 22px; }
.left time { font-family: "Liberation Sans", sans-serif; font-size: 15px; margin-left: -2px; }
.danmaku { gap: 18px; }
.danmaku svg { width: 24px; height: 24px; }
.danmaku text { font-size: 11px; font-weight: 700; fill: #f4f4f4; stroke: none; }
.sender { display: flex; border-radius: 7px 7px 0 0; overflow: hidden; background: rgba(255, 255, 255, .3); font-size: 14px; }
.sender p { flex: 1; margin: 0; padding: 6px; line-height: 28px; color: #dededf; }
.sender a { color: #00a1d6; text-decoration: none; }
.sender button { width: 64px; background: #e7e7e7; color: #999; padding-top: 6px; }
.right { justify-content: flex-end; gap: 30px; padding-right: 1px; font-size: 16px; line-height: 24px; font-weight: 700; white-space: nowrap; }
.right button:first-child { margin-right: -10px; }
.right .rate { margin-left: -6px; }
.right svg { width: 24px; height: 24px; }
.credit { position: absolute; right: 14px; bottom: 4px; font-family: "Liberation Sans", "Noto Sans CJK SC", sans-serif; font-size: 21px; line-height: 30px; color: #d6d6d7; text-shadow: 1px 1px 1px #555; white-space: nowrap; }
```
